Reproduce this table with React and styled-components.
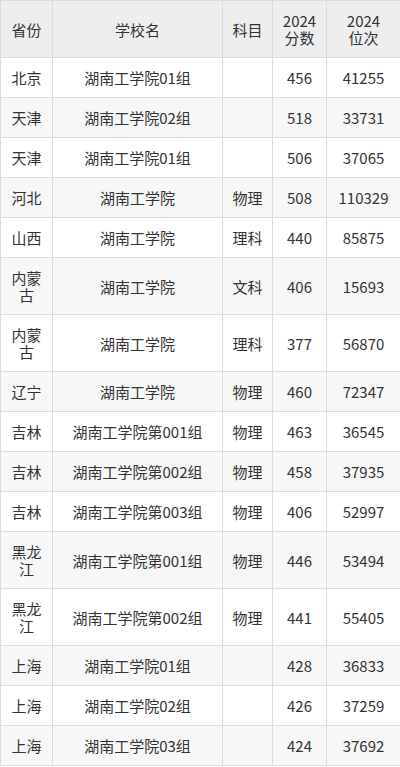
import React from "react";
import styled, { createGlobalStyle } from "styled-components";

const Global = createGlobalStyle`
  html, body { margin: 0; padding: 0; background: #fff; }
  body { font-family: "Noto Sans CJK SC", "Noto Sans", sans-serif; }
`;

const Table = styled.table`
  width: 400px;
  border-collapse: collapse;
  table-layout: fixed;
  font-size: 15px;
  line-height: 17px;
  color: #333;
`;

const Col = styled.col`
  width: ${(p) => p.$w}px;
`;

const HeadCell = styled.th`
  background: #eeeeee;
  font-weight: normal;
  border: 1px solid #dcdcdc;
  padding: 11px 6px;
  text-align: center;
`;

const Row = styled.tr`
  background: ${(p) => (p.$alt ? "#f7f7f7" : "#ffffff")};
`;

const Cell = styled.td`
  border: 1px solid #dcdcdc;
  padding: 11px 6px;
  text-align: center;
  word-break: break-all;
`;

const cols = [52, 170, 50, 54, 74];

const rows = [
  ["北京", "湖南工学院01组", "", "456", "41255"],
  ["天津", "湖南工学院02组", "", "518", "33731"],
  ["天津", "湖南工学院01组", "", "506", "37065"],
  ["河北", "湖南工学院", "物理", "508", "110329"],
  ["山西", "湖南工学院", "理科", "440", "85875"],
  ["内蒙古", "湖南工学院", "文科", "406", "15693"],
  ["内蒙古", "湖南工学院", "理科", "377", "56870"],
  ["辽宁", "湖南工学院", "物理", "460", "72347"],
  ["吉林", "湖南工学院第001组", "物理", "463", "36545"],
  ["吉林", "湖南工学院第002组", "物理", "458", "37935"],
  ["吉林", "湖南工学院第003组", "物理", "406", "52997"],
  ["黑龙江", "湖南工学院第001组", "物理", "446", "53494"],
  ["黑龙江", "湖南工学院第002组", "物理", "441", "55405"],
  ["上海", "湖南工学院01组", "", "428", "36833"],
  ["上海", "湖南工学院02组", "", "426", "37259"],
  ["上海", "湖南工学院03组", "", "424", "37692"],
];

export default function App() {
  return (
    <>
      <Global />
      <Table>
        <colgroup>
          {cols.map((w, i) => (
            <Col key={i} $w={w} />
          ))}
        </colgroup>
        <thead>
          <tr>
            <HeadCell>省份</HeadCell>
            <HeadCell>学校名</HeadCell>
            <HeadCell>科目</HeadCell>
            <HeadCell>2024<br />分数</HeadCell>
            <HeadCell>2024<br />位次</HeadCell>
          </tr>
        </thead>
        <tbody>
          {rows.map((r, i) => (
            <Row key={i} $alt={i % 2 === 1}>
              {r.map((c, j) => (
                <Cell key={j}>{c}</Cell>
              ))}
            </Row>
          ))}
        </tbody>
      </Table>
    </>
  );
}
